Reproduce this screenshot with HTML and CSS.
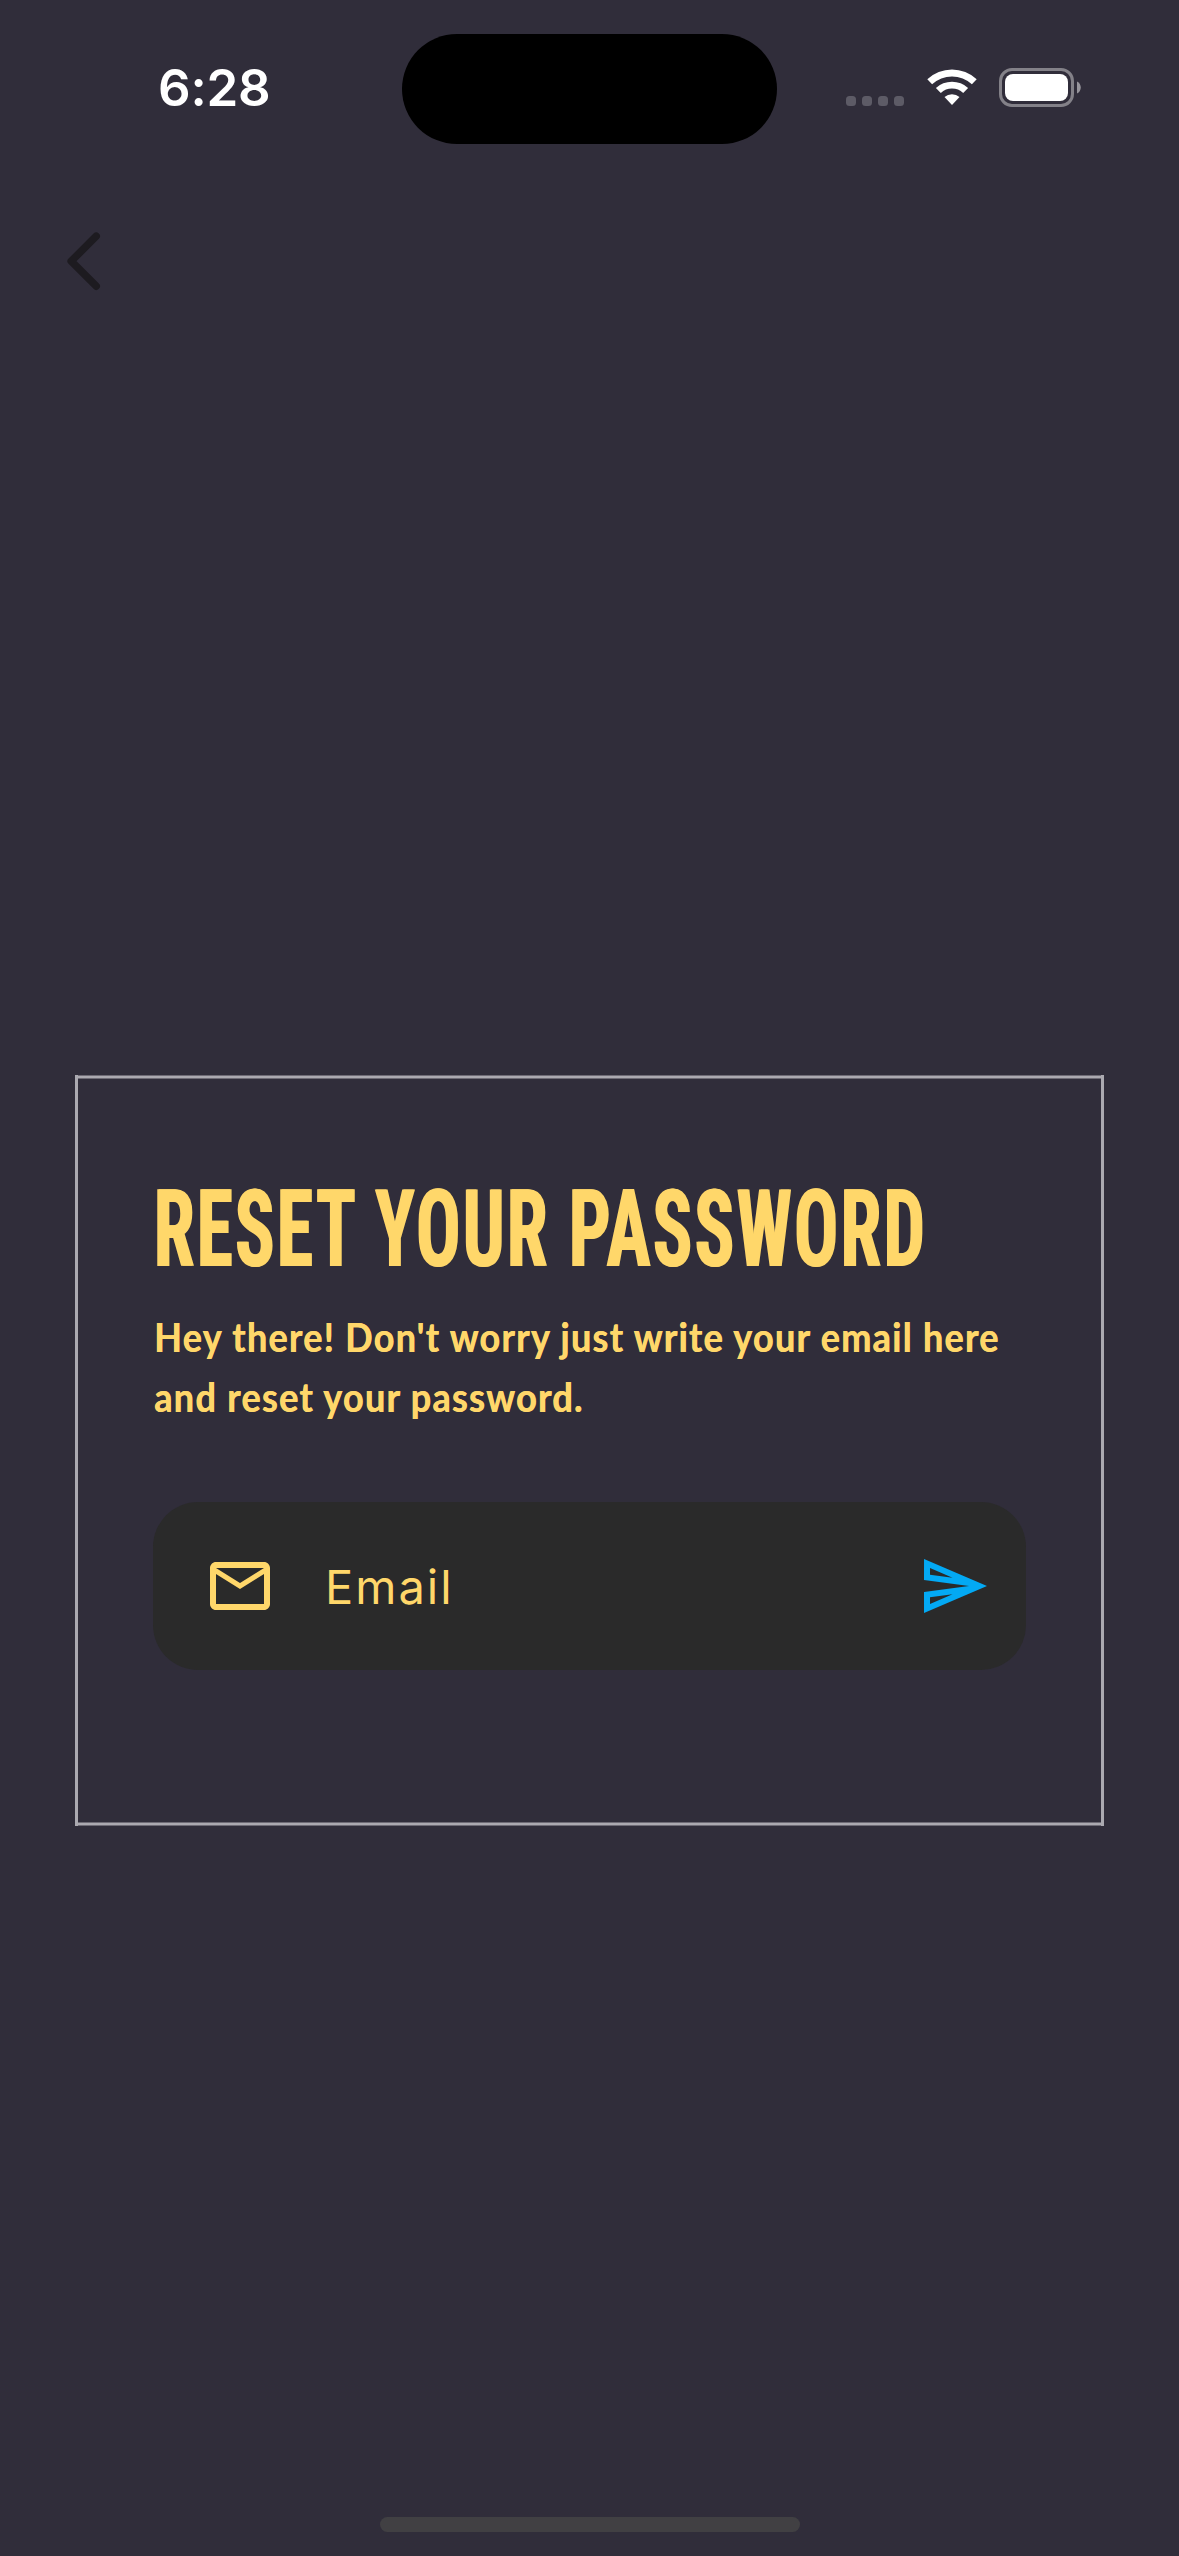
FILE: index.html
```
<!DOCTYPE html>
<html lang="en">
<head>
<meta charset="utf-8">
<title>Reset your password</title>
<link rel="stylesheet" href="styles.css">
</head>
<body>
<div class="screen">
  <header class="status">
    <div class="time">6:28</div>
    <div class="island"></div>
    <div class="indicators">
      <div class="dots"><i></i><i></i><i></i><i></i></div>
      <svg class="wifi" viewBox="0 0 50 38" width="50" height="38" fill="#fff">
        <path d="M0.3 11.2A36 36 0 0 1 49.7 11.2L44.9 16.2A29.3 29.3 0 0 0 5.100 16.2Z"/>
        <path d="M8.900 20.100A23.500 23.500 0 0 1 41.100 20.100L36.200 25A16.500 16.500 0 0 0 13.800 25Z"/>
        <path d="M17.500 29A11.500 11.500 0 0 1 32.500 29L25 37Z"/>
      </svg>
      <svg class="battery" viewBox="0 0 82 39" width="82" height="39">
        <rect x="1.500" y="1.500" width="72" height="36" rx="11.500" fill="none" stroke="#838188" stroke-width="3"/>
        <rect x="6" y="6" width="63" height="27" rx="8" fill="#fff"/>
        <path d="M78 13.500C83 15.500 83 23.500 78 25.500Z" fill="#97959c"/>
      </svg>
    </div>
  </header>
  <nav class="nav">
    <svg viewBox="0 0 36 60" width="36" height="60"><path d="M31.200 5.200L6.200 30.200L31.200 55.200" fill="none" stroke="#1d1b20" stroke-width="7.500" stroke-linecap="round" stroke-linejoin="round"/></svg>
  </nav>
  <main class="content">
    <section class="card">
      <h1 class="title">RESET YOUR PASSWORD</h1>
      <p class="message"><span class="line line-1">Hey there! Don't worry just write your email here</span> <span class="line line-2">and reset your password.</span></p>
      <div class="field">
        <svg viewBox="0 0 24 24" width="72" height="72" fill="#ffd76a"><path d="M22 6c0-1.100-.9-2-2-2H4c-1.100 0-2 .9-2 2v12c0 1.100.9 2 2 2h16c1.100 0 2-.9 2-2V6zm-2 0l-8 5-8-5h16zm0 12H4V8l8 5 8-5v10z"/></svg>
        <span class="placeholder">Email</span>
        <svg viewBox="0 0 24 24" width="72" height="72" fill="#03a9f4"><path d="M4.010 6.030l7.510 3.220-7.520-1 .01-2.220m7.500 8.720L4 17.970v-2.220l7.510-1M2.010 3L2 10l15 2-15 2 .01 7L23 12 2.010 3z"/></svg>
      </div>
    </section>
  </main>
  <footer class="home"><div class="home-bar"></div></footer>
</div>
</body>
</html>
```
FILE: styles.css
```
* { box-sizing: border-box; }
body { margin: 0; background: #302d3a; }
.screen { width: 1179px; height: 2556px; display: flex; flex-direction: column; background: #302d3a; color: #ffd76a; overflow: hidden; }
.status { height: 177px; flex: none; display: grid; grid-template-columns: 402px 375px 1fr; align-items: start; }
.time { margin: 57px 0 0 158px; font: 600 51px/62px Inter, sans-serif; color: #fff; letter-spacing: -0.2px; }
.island { margin-top: 34px; height: 110px; border-radius: 55px; background: #000; }
.indicators { padding: 68px 0 0 69px; display: flex; align-items: flex-start; }
.dots { display: flex; gap: 6px; padding-top: 28px; }
.dots i { width: 10px; height: 10px; border-radius: 3.500px; background: #5d5b66; }
.wifi { margin: 0 0 0 22.500px; }
.battery { margin-left: 22.500px; }
.nav { height: 168px; flex: none; padding: 54px 0 0 65px; }
.nav svg, .field svg { display: block; flex: none; }
.content { flex: 1; padding: 730px 75px 0; }
.card {
  --edge: #aba9b0;
  --soft: #6e6b75;
  height: 751px;
  padding: 111px 75px 0;
  border: solid var(--edge);
  border-width: 0 3px;
  background:
    linear-gradient(var(--soft) 1px, var(--edge) 1px 3px, var(--soft) 3px) top / 100% 4px no-repeat,
    linear-gradient(var(--soft) 1px, var(--edge) 1px 3px, var(--soft) 3px) bottom / 100% 4px no-repeat;
}
.title { margin: 0; height: 88px; font: 700 107px/88px Roboto, sans-serif; font-stretch: 75%; letter-spacing: 3px; text-shadow: 2px 0 currentColor; white-space: nowrap; transform: scaleX(.69); transform-origin: 0 0; }
.message { margin: 33px 0 0 1px; font: 700 40px/60px Lato, sans-serif; letter-spacing: 1.450px; text-shadow: .6px 0 currentColor; }
.line { display: block; width: max-content; white-space: nowrap; transform: scaleX(.9); transform-origin: 0 0; }
.field { width: 873px; height: 168px; margin-top: 75px; padding: 0 36px 0 51px; display: flex; align-items: center; border-radius: 45px; background: #2a2a2a; }
.placeholder { flex: 1; padding: 2px 0 0 49px; font: 400 47px/60px Inter, sans-serif; letter-spacing: 2px; }
.home { height: 39px; flex: none; display: flex; justify-content: center; align-items: flex-start; padding-left: 1px; }
.home-bar { width: 420px; height: 15px; border-radius: 8px; background: #414043; }
```
